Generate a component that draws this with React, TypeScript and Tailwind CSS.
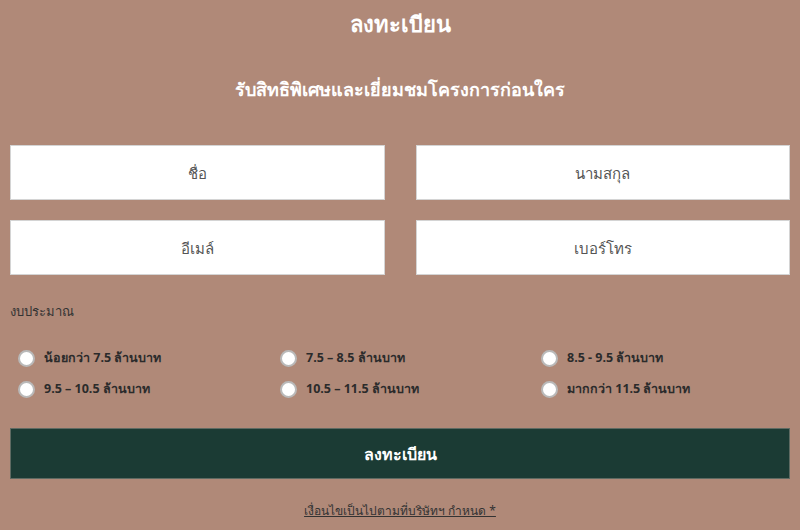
import { useState } from 'react';

const budgets = [
  'น้อยกว่า 7.5 ล้านบาท',
  '7.5 – 8.5 ล้านบาท',
  '8.5 - 9.5 ล้านบาท',
  '9.5 – 10.5 ล้านบาท',
  '10.5 – 11.5 ล้านบาท',
  'มากกว่า 11.5 ล้านบาท',
];

const font = { fontFamily: '"Noto Sans", "Noto Sans CJK SC", "DejaVu Sans", sans-serif' };

export default function App() {
  const [budget, setBudget] = useState('');

  return (
    <div className="w-[800px] h-[530px] bg-[#b08978] overflow-hidden" style={font}>
      <form className="flex flex-col px-[10px]" onSubmit={(e) => e.preventDefault()}>
        <h1 className="text-center text-white text-[22px] font-semibold leading-none pt-[12px] h-[40px]">
          ลงทะเบียน
        </h1>
        <h2 className="text-center text-white text-[18px] font-semibold leading-none mt-[40px]">
          รับสิทธิพิเศษและเยี่ยมชมโครงการก่อนใคร
        </h2>

        <div className="grid grid-cols-2 gap-x-[31px] gap-y-[20px] mt-[47px] w-[780px]">
          {['ชื่อ', 'นามสกุล', 'อีเมล์', 'เบอร์โทร'].map((p) => (
            <input
              key={p}
              type="text"
              placeholder={p}
              className="h-[55px] bg-white border border-[#d4d4d4] text-center text-[15px] text-[#444] placeholder:text-[#555] outline-none"
              style={font}
            />
          ))}
        </div>

        <label className="text-[13px] text-[#333] mt-[30px] leading-none">งบประมาณ</label>

        <div className="grid grid-cols-[262px_261px_1fr] gap-y-[13px] mt-[31px] pl-[8px]">
          {budgets.map((b) => (
            <label key={b} className="flex items-center gap-[9px] cursor-pointer h-[18px]">
              <span
                onClick={() => setBudget(b)}
                className="w-[17px] h-[17px] rounded-full bg-white border-2 border-[#b9b9b9] shrink-0 flex items-center justify-center"
              >
                {budget === b && <span className="w-[7px] h-[7px] rounded-full bg-[#1b3b34]" />}
              </span>
              <span className="text-[12.5px] font-bold text-[#2b2b2b]">{b}</span>
            </label>
          ))}
        </div>

        <button
          type="submit"
          className="mt-[30px] h-[51px] w-[780px] bg-[#1b3b34] border border-[#5e6a62] text-white text-[16px] font-bold"
          style={font}
        >
          ลงทะเบียน
        </button>

        <p className="text-center mt-[23px] text-[12px] text-[#333] underline">
          เงื่อนไขเป็นไปตามที่บริษัทฯ กำหนด *
        </p>
      </form>
    </div>
  );
}
